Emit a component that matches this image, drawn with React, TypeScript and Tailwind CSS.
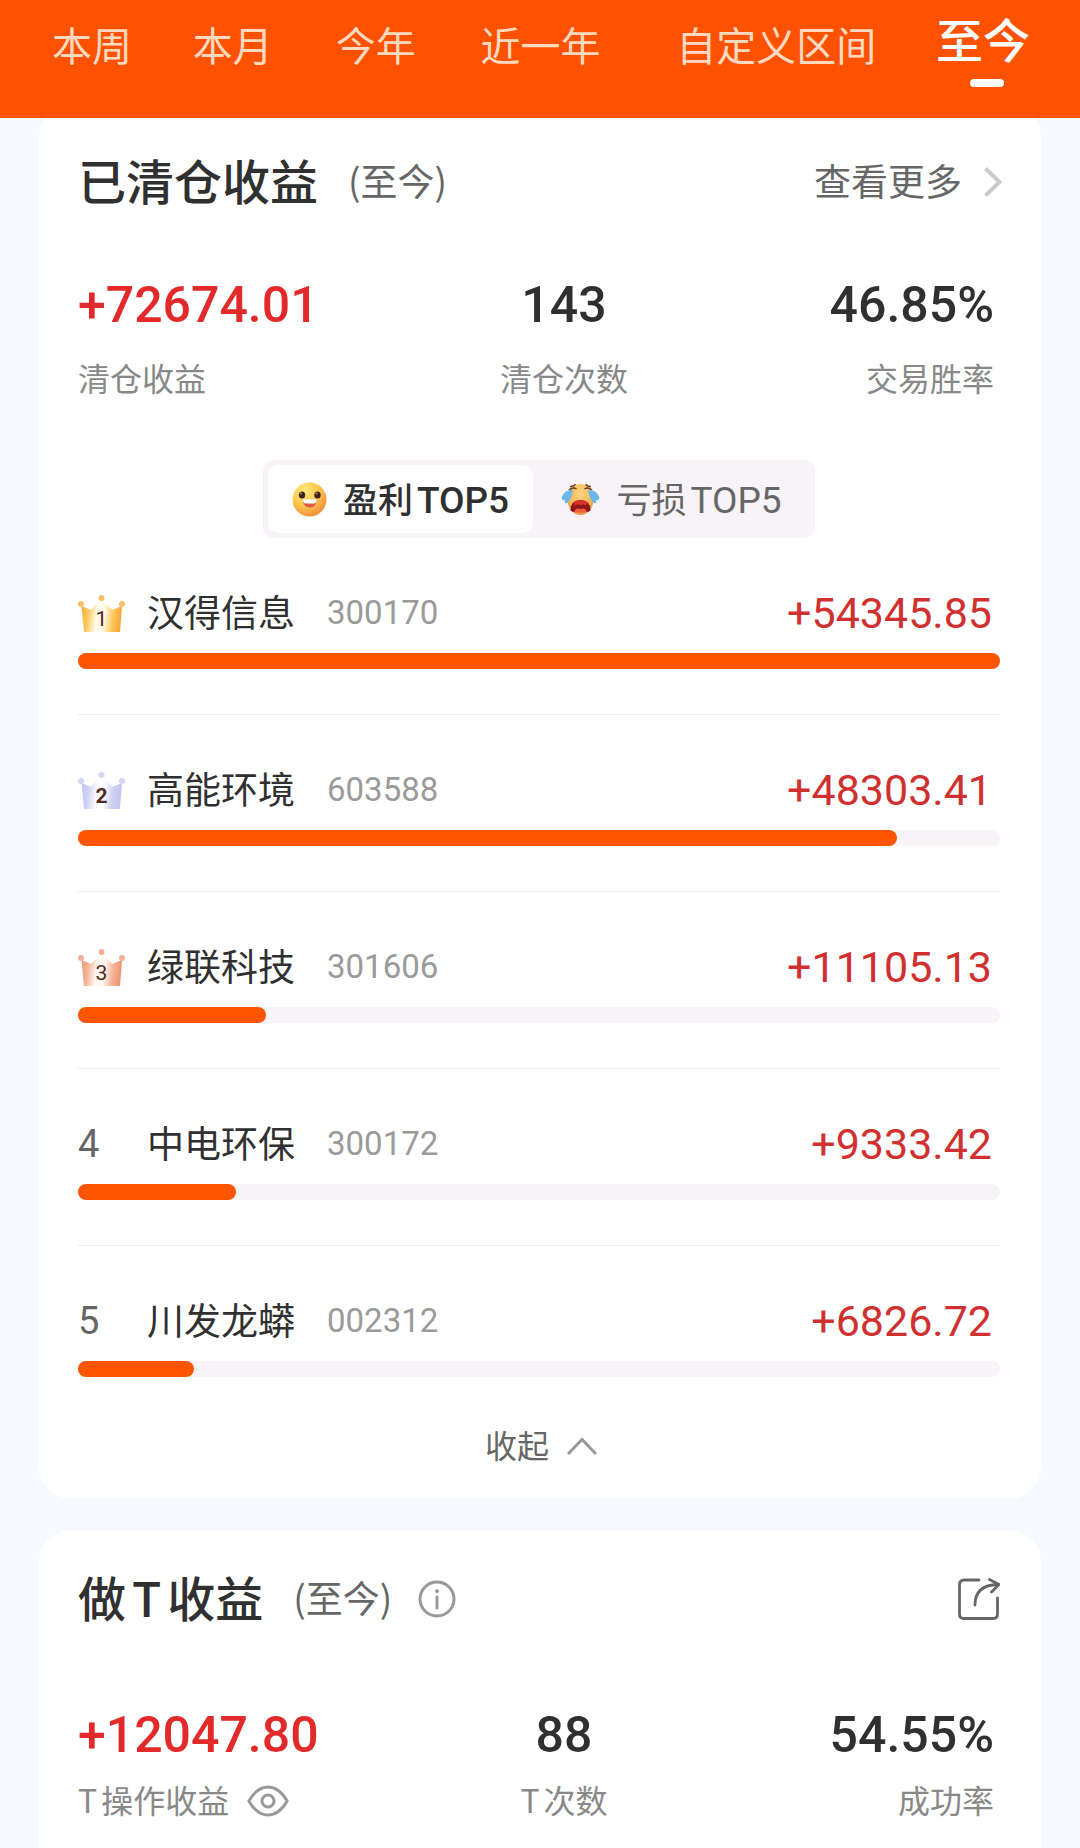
import { useState } from "react";
import clsx from "clsx";

const PERIODS = ["本周", "本月", "今年", "近一年", "自定义区间", "至今"];

const PROFIT_LIST = [
  { name: "汉得信息", code: "300170", profit: 54345.85 },
  { name: "高能环境", code: "603588", profit: 48303.41 },
  { name: "绿联科技", code: "301606", profit: 11105.13 },
  { name: "中电环保", code: "300172", profit: 9333.42 },
  { name: "川发龙蟒", code: "002312", profit: 6826.72 }
];

const CROWN_COLORS = [
  { edge: "#f9a93a", side: "#fcc85c", middle: "#fffbe8", ball: "#f8bf6c" },
  { edge: "#c3c6ee", side: "#cdd0f3", middle: "#fdfdff", ball: "#d3d6f5" },
  { edge: "#ee9672", side: "#f5b497", middle: "#fff8f3", ball: "#f1b09a" }
];

function Crown({ rank }: { rank: number }) {
  const color = CROWN_COLORS[rank - 1];
  const id = `crown-${rank}`;

  return (
    <svg width="47" height="37" viewBox="0 0 47 37" className="shrink-0">
      <defs>
        <linearGradient id={id} x1="0" y1="0" x2="1" y2="0.1">
          <stop offset="0" stopColor={color.edge} />
          <stop offset="0.2" stopColor={color.side} />
          <stop offset="0.42" stopColor={color.middle} />
          <stop offset="0.6" stopColor={color.middle} />
          <stop offset="0.82" stopColor={color.side} />
          <stop offset="1" stopColor={color.edge} />
        </linearGradient>
      </defs>
      <path
        d="M3.5 11 L12.5 14.8 L23.5 5 L34.5 14.8 L44 11 L42 37 H6 Z"
        fill={`url(#${id})`}
      />
      <circle cx="3" cy="9" r="3" fill={color.ball} />
      <circle cx="23.5" cy="3" r="3" fill={color.ball} />
      <circle cx="44" cy="9" r="3" fill={color.ball} />
      <text
        x="23.5"
        y="31"
        textAnchor="middle"
        fontSize="21"
        fontFamily="Roboto, sans-serif"
        fontWeight={rank === 2 ? 700 : 400}
        fill="#4f2a20"
      >
        {rank}
      </text>
    </svg>
  );
}

function HappyFace() {
  return (
    <svg width="35" height="35" viewBox="0 0 35 35">
      <defs>
        <radialGradient id="happy" cx="0.35" cy="0.25" r="0.8">
          <stop offset="0" stopColor="#ffe97a" />
          <stop offset="0.55" stopColor="#fdc64b" />
          <stop offset="1" stopColor="#ee8a3c" />
        </radialGradient>
      </defs>
      <circle cx="17.5" cy="17.5" r="17" fill="url(#happy)" />
      <ellipse cx="10" cy="13" rx="3.2" ry="3.6" fill="#3b2214" />
      <ellipse cx="25.5" cy="13" rx="3.2" ry="3.6" fill="#3b2214" />
      <circle cx="9" cy="11.6" r="1" fill="#b08a6c" />
      <circle cx="24.5" cy="11.6" r="1" fill="#b08a6c" />
      <path d="M10.5 17.5 H25 Q24 25.5 17.7 25.5 Q11.5 25.5 10.5 17.5 Z" fill="#e2574a" />
      <path d="M10.5 17.2 H25 Q24.6 21.4 21.5 21.6 H14 Q11 21.4 10.5 17.2 Z" fill="#ffffff" />
    </svg>
  );
}

function CryingFace() {
  return (
    <svg width="39" height="35" viewBox="0 0 39 35">
      <defs>
        <radialGradient id="crying" cx="0.5" cy="0.3" r="0.75">
          <stop offset="0" stopColor="#fbd581" />
          <stop offset="0.65" stopColor="#f6b354" />
          <stop offset="1" stopColor="#ea8a48" />
        </radialGradient>
      </defs>
      <ellipse cx="19.5" cy="17.5" rx="13" ry="15.5" fill="url(#crying)" />
      <path d="M9 4.5 Q12 5 14.5 2.2 M8 8 Q12 4.5 15.5 7" stroke="#6b3d22" strokeWidth="1.5" fill="none" />
      <path d="M30 4.5 Q27 5 24.5 2.2 M31 8 Q27 4.5 23.5 7" stroke="#6b3d22" strokeWidth="1.5" fill="none" />
      <path d="M12 8 Q3.5 7 0.5 16 Q1.5 19 4 18 Q3 21 5.5 21.5 Q10.5 18 12 8 Z" fill="#6cb6ec" />
      <path d="M27 8 Q35.5 7 38.5 16 Q37.5 19 35 18 Q36 21 33.5 21.5 Q28.5 18 27 8 Z" fill="#6cb6ec" />
      <path d="M9.5 28.5 Q9.5 18 19.5 18 Q29.5 18 29.5 28.5 Q27 30.5 24.5 30 H14.5 Q12 30.5 9.5 28.5 Z" fill="#8f1717" />
      <path d="M12 20.5 Q19.5 16 27 20.5 L24.5 23.5 Q22 21.5 19.5 23.5 Q17 21.5 14.5 23.5 Z" fill="#d92f2b" />
      <path d="M13 29.8 Q15 25.5 19.5 27 Q24 25.5 26 29.8 Q19.5 31.5 13 29.8 Z" fill="#f0603f" />
    </svg>
  );
}

type StatProps = {
  value: string;
  label: React.ReactNode;
  align: "start" | "center" | "end";
  gap: "sm" | "lg";
  red?: boolean;
};

function Stat({ value, label, align, gap, red }: StatProps) {
  return (
    <div
      className={clsx(
        "flex flex-col whitespace-nowrap",
        align === "start" && "items-start",
        align === "center" && "items-center",
        align === "end" && "items-end",
        gap === "sm" ? "gap-3" : "gap-5"
      )}
    >
      <dd
        className={clsx(
          "order-1 font-[Roboto,sans-serif] text-[50px] font-medium leading-14",
          red ? "text-[#e32a2a]" : "text-[#303030]"
        )}
      >
        {value}
      </dd>
      <dt className="order-2 flex h-12 items-center text-[32px] leading-12 text-[#888888]">
        {label}
      </dt>
    </div>
  );
}

function StockRow({ rank, name, code, profit }: { rank: number; name: string; code: string; profit: number }) {
  const width = (profit / PROFIT_LIST[0].profit) * 100;

  return (
    <li className="border-b border-[#ececec] pt-[51px] pb-[45px] last:border-b-0">
      <div className="flex h-12 items-center">
        <div className="w-[69px]">
          {rank <= 3 ? (
            <Crown rank={rank} />
          ) : (
            <span className="font-[Roboto,sans-serif] text-[38px] leading-12 text-[#666666]">{rank}</span>
          )}
        </div>
        <span className="pb-1 text-[37px] leading-12 text-[#303030]">{name}</span>
        <span className="ml-8 font-[Roboto,sans-serif] text-[33px] leading-12 text-[#9a9a9a]">{code}</span>
        <span className="ml-auto pr-2 font-[Roboto,sans-serif] text-[43px] leading-12 text-[#d03030]">
          +{profit.toFixed(2)}
        </span>
      </div>
      <div className="mt-4 h-4 rounded-full bg-[#f7f3f7]">
        <div className="h-full rounded-full bg-[#ff5500]" style={{ width: `${width}%` }} />
      </div>
    </li>
  );
}

export default function App() {
  const [period, setPeriod] = useState("至今");
  const [rankType, setRankType] = useState("profit");

  return (
    <div className="flex min-h-screen flex-col bg-[#f6faff] font-['Noto_Sans_CJK_SC',sans-serif]">
      <nav className="z-10 grid h-[118px] grid-cols-[142fr_140fr_146fr_184fr_288fr_126fr] bg-[#ff5200] pr-[34px] pl-[21px]">
        {PERIODS.map((item) => (
          <button
            key={item}
            type="button"
            onClick={() => setPeriod(item)}
            className={clsx(
              "flex flex-col items-center whitespace-nowrap",
              period === item
                ? "pt-1.5 text-[47px] leading-16 font-medium text-white"
                : "pt-3.5 text-[40px] leading-15 text-[#ffd9bf]"
            )}
          >
            {item}
            {period === item && <span className="mt-[9px] ml-2 h-2 w-[34px] rounded-full bg-white" />}
          </button>
        ))}
      </nav>

      <main className="-mt-3 flex flex-1 flex-col gap-[31px] px-[39px]">
        <section className="rounded-[32px] bg-white pt-11 pr-[41px] pb-[29px] pl-[39px]">
          <div className="flex h-16 items-center">
            <h2 className="pb-1.5 text-[48px] leading-16 font-medium text-[#303030]">已清仓收益</h2>
            <span className="ml-[30px] pb-1 text-[37px] leading-16 text-[#666666]">(至今)</span>
            <a href="#more" className="-mr-0.5 ml-auto flex items-center gap-[22px] text-[37px] leading-16 text-[#666666]">
              <span className="pb-1">查看更多</span>
              <svg width="18" height="30" viewBox="0 0 18 30" fill="none" stroke="#cacaca" strokeWidth="4">
                <path d="M1.5 1.5 L15.5 15 L1.5 28.5" />
              </svg>
            </a>
          </div>

          <dl className="mt-[63px] grid grid-cols-[420fr_132fr_364fr] pr-1.5">
            <Stat value="+72674.01" label="清仓收益" align="start" gap="lg" red />
            <Stat value="143" label="清仓次数" align="center" gap="lg" />
            <Stat value="46.85%" label="交易胜率" align="end" gap="lg" />
          </dl>

          <div className="mx-auto mt-[59px] grid h-[78px] w-[552px] grid-cols-[265fr_277fr] rounded-[10px] bg-[#f7f3f7] p-[5px]">
            <button
              type="button"
              onClick={() => setRankType("profit")}
              className={clsx(
                "flex items-center justify-center gap-4 rounded-[10px] text-[35px] leading-12",
                rankType === "profit" ? "bg-white font-medium text-[#303030]" : "text-[#666666]"
              )}
            >
              <HappyFace />
              <span>
                盈利<span className="ml-1 font-[Roboto,sans-serif] text-[37px]">TOP5</span>
              </span>
            </button>
            <button
              type="button"
              onClick={() => setRankType("loss")}
              className={clsx(
                "flex items-center justify-center gap-4 rounded-[10px] text-[35px] leading-12",
                rankType === "loss" ? "bg-white font-medium text-[#303030]" : "text-[#666666]"
              )}
            >
              <CryingFace />
              <span>
                亏损<span className="ml-1 font-[Roboto,sans-serif] text-[37px]">TOP5</span>
              </span>
            </button>
          </div>

          <ol>
            {PROFIT_LIST.map((stock, index) => (
              <StockRow key={stock.code} rank={index + 1} {...stock} />
            ))}
          </ol>

          <button
            type="button"
            className="mx-auto flex h-12 items-center gap-[18px] pl-1 text-[32px] leading-12 text-[#666666]"
          >
            <span className="pb-1">收起</span>
            <svg width="30" height="18" viewBox="0 0 30 18" fill="none" stroke="#999999" strokeWidth="3">
              <path d="M1 17 L15 2.5 L29 17" />
            </svg>
          </button>
        </section>

        <section className="flex-1 rounded-t-[32px] bg-white pt-[37px] pr-[41px] pl-[39px]">
          <div className="flex h-16 items-center">
            <h2 className="pb-1.5 text-[48px] leading-16 font-medium text-[#303030]">
              做<span className="mx-1.5">T</span>收益
            </h2>
            <span className="ml-[30px] pb-1 text-[37px] leading-16 text-[#666666]">(至今)</span>
            <button type="button" aria-label="说明" className="ml-[26px]">
              <svg width="38" height="38" viewBox="0 0 38 38" fill="none" stroke="#999999" strokeWidth="3">
                <circle cx="19" cy="19" r="17" />
                <path d="M19 17 V28" strokeLinecap="round" />
                <circle cx="19" cy="11.2" r="1.9" fill="#999999" stroke="none" />
              </svg>
            </button>
            <button type="button" aria-label="分享" className="ml-auto">
              <svg
                width="42"
                height="42"
                viewBox="0 0 42 42"
                fill="none"
                stroke="#666666"
                strokeWidth="2.8"
                strokeLinecap="round"
                strokeLinejoin="round"
              >
                <path d="M21 2 H6 Q1.5 2 1.5 6.5 V36 Q1.5 40.5 6 40.5 H35 Q39.5 40.5 39.5 36 V20" />
                <path d="M17 27 Q17 7 40 6.5" />
                <path d="M31.5 1.5 L41 6.5 L33.5 14" />
              </svg>
            </button>
          </div>

          <dl className="mt-[76px] grid grid-cols-[420fr_132fr_364fr] pr-1.5">
            <Stat
              value="+12047.80"
              label={
                <>
                  <span className="mr-1">T</span>操作收益
                  <button type="button" aria-label="显示收益" className="mt-1 ml-[18px]">
                    <svg width="42" height="32" viewBox="0 0 42 32" fill="none" stroke="#999999" strokeWidth="3">
                      <path
                        d="M1.8 16 Q10 2 21 2 Q32 2 40.2 16 Q32 30 21 30 Q10 30 1.8 16 Z"
                        strokeLinejoin="round"
                      />
                      <circle cx="21" cy="16" r="6" />
                    </svg>
                  </button>
                </>
              }
              align="start"
              gap="sm"
              red
            />
            <Stat
              value="88"
              label={
                <>
                  <span className="mr-1">T</span>次数
                </>
              }
              align="center"
              gap="sm"
            />
            <Stat value="54.55%" label="成功率" align="end" gap="sm" />
          </dl>
        </section>
      </main>
    </div>
  );
}
